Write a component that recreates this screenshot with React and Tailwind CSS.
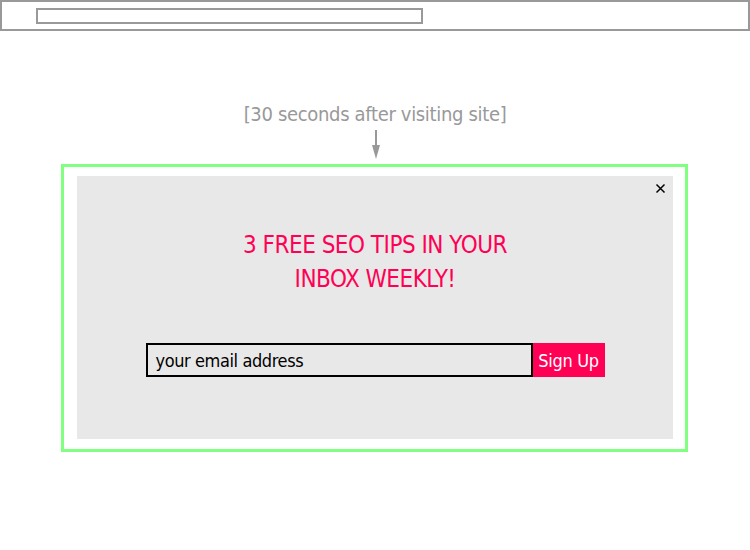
import React from "react";

const FONT = { fontFamily: '"DejaVu Sans Condensed", "Liberation Sans", sans-serif' };

export default function App() {
  return (
    <div className="w-[750px] h-[550px] bg-white flex flex-col" style={FONT}>
      <div className="h-[31px] w-[750px] border-2 border-[#999999] pt-[6px] pl-[34px]">
        <div className="w-[387px] h-[16px] border-2 border-[#999999]" />
      </div>
      <div className="flex flex-col items-center">
        <div className="mt-[71px] h-[24px] leading-[24px] text-[20px] tracking-[-0.33px] text-[#999999] whitespace-nowrap">
          [30 seconds after visiting site]
        </div>
        <svg className="mt-[4px] ml-[1px]" width="10" height="30" viewBox="0 0 10 30">
          <line x1="5" y1="0" x2="5" y2="16" stroke="#999999" strokeWidth="2" />
          <polygon points="1,15 9,15 5,29" fill="#999999" />
        </svg>
      </div>
      <div className="mt-[4px] ml-[61px] w-[627px] h-[288px] border-[3px] border-[#80ff80] pl-[13px] pr-[12px] pt-[9px] pb-[10px]">
        <div className="relative w-[596px] h-[263px] bg-[#e8e8e8] flex flex-col items-center pt-[52px]">
          <svg className="absolute top-[7px] right-[7px]" width="11" height="11" viewBox="0 0 11 11">
            <path d="M1.5 1.5 L9.5 9.5 M9.5 1.5 L1.5 9.5" stroke="#000" strokeWidth="1.5" />
          </svg>
          <div className="text-[24px] leading-[34px] tracking-[-0.5px] text-[#ff0055] text-center">
            <div>3 FREE SEO TIPS IN YOUR</div>
            <div>INBOX WEEKLY!</div>
          </div>
          <div className="mt-[47px] flex h-[34px]">
            <div className="w-[387px] h-[34px] border-2 border-black pl-[8px] flex items-center text-[18px] tracking-[-0.4px] text-black">
              your email address
            </div>
            <div className="w-[72px] h-[34px] bg-[#ff0055] text-white text-[18px] tracking-[-0.3px] flex items-center justify-center">
              Sign Up
            </div>
          </div>
        </div>
      </div>
    </div>
  );
}
